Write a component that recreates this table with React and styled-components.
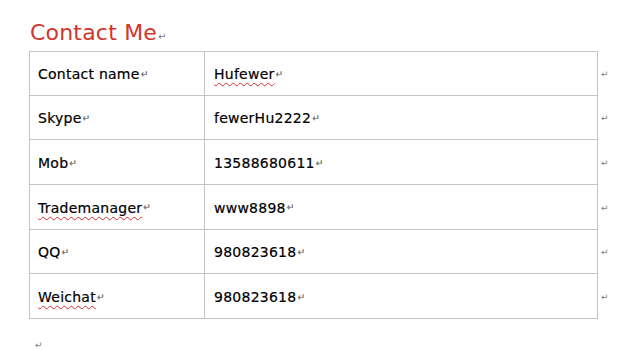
import React from "react";
import styled, { createGlobalStyle } from "styled-components";

const GlobalStyle = createGlobalStyle`
  html, body {
    margin: 0;
    padding: 0;
    background: #ffffff;
  }
  body {
    font-family: "DejaVu Sans", "Liberation Sans", sans-serif;
    color: #000;
  }
`;

const Page = styled.main`
  width: 638px;
  height: 349px;
  box-sizing: border-box;
  padding: 16px 0 0 29px;
  overflow: hidden;
`;

const Title = styled.h1`
  margin: 0 0 2px 1px;
  height: 33px;
  font-family: "DejaVu Sans", sans-serif;
  font-weight: normal;
  font-size: 22px;
  line-height: 33px;
  letter-spacing: 0.2px;
  color: #d2352b;
`;

const Mark = styled.span`
  display: inline-block;
  margin-left: 1px;
  font-family: "DejaVu Sans", sans-serif;
  font-size: ${p => p.$size || 9}px;
  line-height: 1;
  color: #808080;
  letter-spacing: 0;
`;

const Grid = styled.div`
  display: grid;
  grid-template-columns: 176px 393px 20px;
  grid-auto-rows: 44.67px;
`;

const Cell = styled.div`
  display: flex;
  align-items: center;
  box-sizing: border-box;
  padding: 2px 0 0 ${p => (p.$first ? 8 : 9)}px;
  border-bottom: 1px solid #c4c4c4;
  border-right: 1px solid #c4c4c4;
  border-left: ${p => (p.$first ? "1px solid #c4c4c4" : "none")};
  border-top: ${p => (p.$top ? "1px solid #c4c4c4" : "none")};
  font-size: 14px;
  letter-spacing: 0.25px;
  white-space: nowrap;
  -webkit-text-stroke: 0.2px #000;
`;

const RowEnd = styled.div`
  display: flex;
  align-items: center;
  padding: 2px 0 0 2px;
`;

const Misspelt = styled.span`
  text-decoration: underline wavy #d23030;
  text-decoration-thickness: 1px;
  text-underline-offset: 3px;
`;

const Trailing = styled.div`
  margin: 14px 0 0 5px;
`;

const rows = [
  { label: "Contact name", value: "Hufewer", valueWavy: true },
  { label: "Skype", value: "fewerHu2222" },
  { label: "Mob", value: "13588680611" },
  { label: "Trademanager", value: "www8898", labelWavy: true },
  { label: "QQ", value: "980823618" },
  { label: "Weichat", value: "980823618", labelWavy: true }
];

const Text = ({ wavy, children }) =>
  wavy ? <Misspelt>{children}</Misspelt> : <span>{children}</span>;

class App extends React.Component {
  render() {
    return (
      <Page>
        <GlobalStyle />
        <Title>
          Contact Me<Mark $size={10}>↵</Mark>
        </Title>
        <Grid>
          {rows.map((row, i) => (
            <React.Fragment key={row.label}>
              <Cell $first $top={i === 0}>
                <Text wavy={row.labelWavy}>{row.label}</Text>
                <Mark>↵</Mark>
              </Cell>
              <Cell $top={i === 0}>
                <Text wavy={row.valueWavy}>{row.value}</Text>
                <Mark>↵</Mark>
              </Cell>
              <RowEnd>
                <Mark>↵</Mark>
              </RowEnd>
            </React.Fragment>
          ))}
        </Grid>
        <Trailing>
          <Mark>↵</Mark>
        </Trailing>
      </Page>
    );
  }
}

export default App;
